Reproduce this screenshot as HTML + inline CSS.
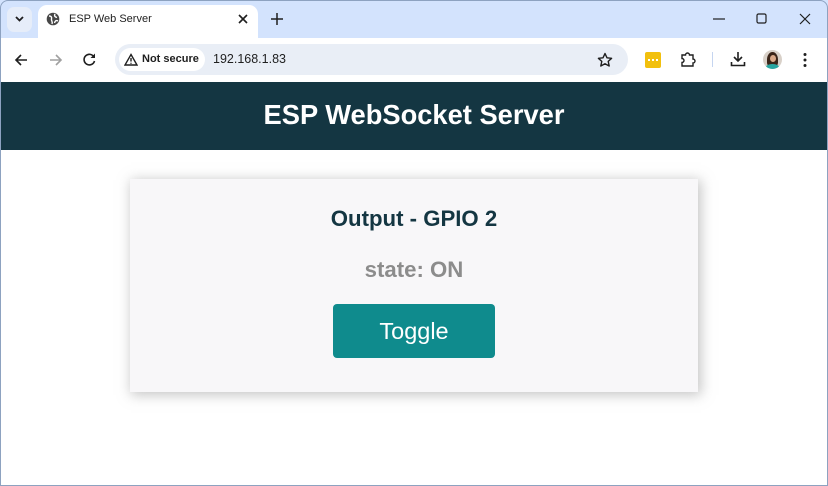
<!DOCTYPE html>
<html><head><style>
*{margin:0;padding:0;box-sizing:border-box}
body{width:828px;height:486px;overflow:hidden;font-family:"Liberation Sans",Arial,sans-serif;background:#fff;position:relative}
.frame{position:absolute;inset:0;border:1px solid #8da2c0;border-radius:8px 8px 0 0;pointer-events:none;z-index:9}
.tabs{position:absolute;left:0;top:0;width:828px;height:38px;background:#d3e3fd}
.tab{position:absolute;left:38px;top:5px;width:220px;height:34px;background:#fff;border-radius:9px 9px 0 0}
.toolbar{position:absolute;left:0;top:38px;width:828px;height:44px;background:#fff}
.url{position:absolute;left:115px;top:44px;width:513px;height:31px;background:#e9eef6;border-radius:16px}
.ns{position:absolute;left:119px;top:48px;width:86px;height:23px;background:#fff;border-radius:12px;font-size:11px;font-weight:bold;color:#1f1f1f;line-height:23px;padding-left:23px}
.t{position:absolute;color:#1f1f1f}
header{position:absolute;left:0;top:82px;width:828px;height:68px;background:#143642;color:#fff;font-weight:bold;font-size:27.3px;text-align:center;line-height:66px}
.card{position:absolute;left:130px;top:179px;width:568px;height:213px;background:#f8f7f9;box-shadow:2px 2px 12px 1px rgba(140,140,140,.5);text-align:center}
h2{position:absolute;width:100%;top:27px;font-size:22.2px;color:#143642}
.st{position:absolute;width:100%;top:78px;font-size:22.2px;font-weight:bold;color:#8c8c8c}
.btn{position:absolute;left:203px;top:125px;width:162px;height:54px;background:#0f8b8d;border-radius:4px;color:#fff;font-size:23.5px;line-height:54px}
</style></head><body>
<div class="tabs"></div>
<div style="position:absolute;left:7px;top:7px;width:25px;height:25px;background:#e6edf9;border-radius:7px"></div>
<svg style="position:absolute;left:14px;top:15px" width="11" height="8"><path d="M2 2l3.5 3.5L9 2" stroke="#1f1f1f" stroke-width="1.8" fill="none"/></svg>
<div class="tab"></div>
<svg style="position:absolute;left:46px;top:12px" width="14" height="14" viewBox="0 0 14 14"><circle cx="7" cy="7" r="6.3" fill="#474747"/><path d="M3 4c2 0 3 1 2.5 3S7 9 6 12M9 2c-1 2 0 3 2 3.5M12 9c-2-1-3 0-3.5 2" stroke="#fff" stroke-width="1.4" fill="none"/></svg>
<div class="t" style="left:69px;top:13px;font-size:11px">ESP Web Server</div>
<svg style="position:absolute;left:238px;top:14px" width="10" height="10"><path d="M1 1l8 8M9 1l-8 8" stroke="#1f1f1f" stroke-width="1.6"/></svg>
<svg style="position:absolute;left:271px;top:13px" width="12" height="12"><path d="M6 0v12M0 6h12" stroke="#1f1f1f" stroke-width="1.5"/></svg>
<svg style="position:absolute;left:713px;top:18px" width="12" height="2"><path d="M0 1h12" stroke="#1f1f1f" stroke-width="1.2"/></svg>
<svg style="position:absolute;left:756px;top:13px" width="11" height="11"><rect x="1" y="1" width="9" height="9" rx="1.5" stroke="#1f1f1f" stroke-width="1.2" fill="none"/></svg>
<svg style="position:absolute;left:799px;top:13px" width="12" height="12"><path d="M1 1l10 10M11 1l-10 10" stroke="#1f1f1f" stroke-width="1.2"/></svg>
<div class="toolbar"></div>
<svg style="position:absolute;left:14px;top:53px" width="14" height="14"><path d="M13 7H2M7 2L2 7l5 5" stroke="#1f1f1f" stroke-width="1.6" fill="none"/></svg>
<svg style="position:absolute;left:49px;top:53px" width="14" height="14"><path d="M1 7h11M7 2l5 5-5 5" stroke="#a0a0a0" stroke-width="1.6" fill="none"/></svg>
<svg style="position:absolute;left:82px;top:52px" width="15" height="15"><path d="M12 5A5.3 5.3 0 1 0 12.5 9" stroke="#1f1f1f" stroke-width="1.6" fill="none"/><path d="M13 1.5v4.5h-4.5z" fill="#1f1f1f"/></svg>
<div class="url"></div>
<div class="ns">Not secure</div>
<svg style="position:absolute;left:124px;top:53px" width="14" height="13"><path d="M7 1.5L13 12H1z" stroke="#1f1f1f" stroke-width="1.4" fill="none"/><path d="M7 5v3.5M7 9.7v1" stroke="#1f1f1f" stroke-width="1.4"/></svg>
<div class="t" style="left:213px;top:52px;font-size:12.5px">192.168.1.83</div>
<svg style="position:absolute;left:597px;top:52px" width="16" height="16" viewBox="0 0 16 16"><path d="M8 1.5l2 4.3 4.6.5-3.4 3.1 1 4.6L8 11.7 3.8 14l1-4.6L1.4 6.3 6 5.8z" stroke="#1f1f1f" stroke-width="1.4" fill="none" stroke-linejoin="round"/></svg>
<div style="position:absolute;left:645px;top:52px;width:16px;height:16px;background:#f2c00e;border-radius:2px"></div>
<div style="position:absolute;left:648px;top:59px;width:10px;height:2px;border-top:2px dotted #fff"></div>
<svg style="position:absolute;left:680px;top:51px" width="16" height="17"><path d="M2 4h3.5a2 2 0 0 1 4 0H13v4a2 2 0 0 1 0 4v3H2v-3.5a2 2 0 0 0 0-4z" stroke="#1f1f1f" stroke-width="1.4" fill="none"/></svg>
<div style="position:absolute;left:712px;top:52px;width:1px;height:15px;background:#c5d5f0"></div>
<svg style="position:absolute;left:730px;top:51px" width="16" height="16"><path d="M8 1v9M4 6l4 4 4-4M1.5 11v3.5h13V11" stroke="#1f1f1f" stroke-width="1.6" fill="none"/></svg>
<div style="position:absolute;left:763px;top:50px;width:19px;height:19px;border-radius:50%;background:#d8d0c8;overflow:hidden"><div style="position:absolute;left:4px;top:2px;width:11px;height:15px;background:#3a2418;border-radius:50% 50% 30% 30%"></div><div style="position:absolute;left:6.5px;top:5px;width:6px;height:7px;background:#d9a888;border-radius:50%"></div><div style="position:absolute;left:3px;top:14px;width:13px;height:6px;background:#28a5a0;border-radius:50% 50% 0 0"></div></div>
<svg style="position:absolute;left:803px;top:52px" width="4" height="16"><circle cx="2" cy="2.5" r="1.5" fill="#1f1f1f"/><circle cx="2" cy="8" r="1.5" fill="#1f1f1f"/><circle cx="2" cy="13.5" r="1.5" fill="#1f1f1f"/></svg>
<header>ESP WebSocket Server</header>
<div class="card">
<h2>Output - GPIO 2</h2>
<div class="st">state: ON</div>
<div class="btn">Toggle</div>
</div>
<div class="frame"></div>
</body></html>
